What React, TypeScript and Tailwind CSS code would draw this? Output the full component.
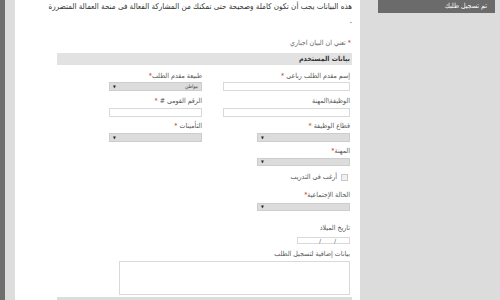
import React from 'react';

type LabelProps = { text: string; star?: string };

function Label({ text, star }: LabelProps) {
  return (
    <div className="h-[12px] leading-[12px] text-[7px] text-[#555] whitespace-nowrap">
      {text}
      {star !== undefined && <span className="text-[#c0392b]">{star}</span>}
    </div>
  );
}

function Select({ value, w, h }: { value?: string; w: string; h: string }) {
  return (
    <div
      className={`${w} ${h} flex items-center justify-between bg-[#dcdcdc] border border-[#cdcdcd] px-[3px]`}
    >
      <span className="text-[5px] leading-none text-[#444]">{value ?? ''}</span>
      <span className="text-[4px] leading-none text-[#222]">▼</span>
    </div>
  );
}

function Input({ w, h }: { w: string; h: string }) {
  return <div className={`${w} ${h} bg-white border border-[#d9d9d9]`} />;
}

export default function App() {
  return (
    <div
      dir="rtl"
      className="w-[500px] h-[300px] overflow-hidden flex flex-row-reverse font-['DejaVu_Sans',sans-serif] [font-stretch:condensed] bg-white"
    >
      {/* left strips */}
      <div className="w-[5px] h-full bg-[#6e6e6e]" />
      <div className="w-[10px] h-full bg-[#dddddd]" />

      {/* Form panel */}
      <div className="w-[345px] h-full bg-white pl-[42px] pr-[8px]">
        <p className="text-[8px] leading-[14px] text-[#333] whitespace-nowrap">
          هذه البيانات يجب أن تكون كاملة وصحيحة حتى تمكنك من المشاركة الفعالة فى منحة العمالة المتضررة
          <br />.
        </p>

        <div className="mt-[9px] h-[12px] leading-[12px] text-[7px] text-[#666] pr-[1px]">
          <span className="text-[#c0392b]">* </span>تعني ان البيان اجباري
        </div>

        {/* Section header */}
        <div className="mt-[4px] h-[12px] bg-[#e2e2e2] flex items-center pr-[2px]">
          <span className="text-[7px] font-bold text-[#333]">بيانات المستخدم</span>
        </div>

        <div className="pr-[2px]">
          {/* row 1 */}
          <div className="mt-[5px] flex">
            <div className="w-[148px]">
              <Label text="إسم مقدم الطلب رباعى" star=" *" />
              <Input w="w-[127px]" h="h-[9px]" />
            </div>
            <div className="w-[93px]">
              <Label text="طبيعة مقدم الطلب" star="*" />
              <Select value="مواطن" w="w-[93px]" h="h-[9px]" />
            </div>
          </div>

          {/* row 2 */}
          <div className="mt-[4px] flex">
            <div className="w-[148px]">
              <Label text="الوظيفة\المهنة" />
              <div className="mt-[1px]">
                <Input w="w-[127px]" h="h-[9px]" />
              </div>
            </div>
            <div className="w-[93px]">
              <Label text="الرقم القومى #" star=" *" />
              <div className="mt-[1px]">
                <Input w="w-[93px]" h="h-[9px]" />
              </div>
            </div>
          </div>

          {/* row 3 */}
          <div className="mt-[3px] flex">
            <div className="w-[148px]">
              <Label text="قطاع الوظيفة" star=" *" />
              <div className="mt-[1px]">
                <Select w="w-[93px]" h="h-[9px]" />
              </div>
            </div>
            <div className="w-[93px]">
              <Label text="التأمينات" star=" *" />
              <div className="mt-[1px]">
                <Select w="w-[93px]" h="h-[9px]" />
              </div>
            </div>
          </div>

          {/* row 4 */}
          <div className="mt-[3px]">
            <Label text="المهنة" star="*" />
            <div className="mt-[1px]">
              <Select w="w-[93px]" h="h-[8px]" />
            </div>
          </div>

          {/* checkbox */}
          <div className="mt-[5px] h-[12px] flex items-center gap-[4px] pr-[2px]">
            <div className="w-[7px] h-[7px] border border-[#c8c8c8] bg-[#f0f0f0]" />
            <span className="text-[7px] text-[#555]">أرغب فى التدريب</span>
          </div>

          {/* marital */}
          <div className="mt-[6px]">
            <Label text="الحالة الإجتماعية" star="*" />
            <div className="mt-[2px]">
              <Select w="w-[93px]" h="h-[8px]" />
            </div>
          </div>

          {/* birth date */}
          <div className="mt-[11px]">
            <Label text="تاريخ الميلاد" />
            <div className="mt-[3px] w-[53px] h-[7px] border border-[#d9d9d9] flex items-center text-[6px] leading-none text-[#444]">
              <span className="w-[13px]" />
              <span className="w-[15px]">/</span>
              <span>/</span>
            </div>
          </div>

          {/* extra */}
          <div className="mt-[4px]">
            <Label text="بيانات إضافية لتسجيل الطلب" />
            <div className="mt-[1px] w-[231px] h-[34px] border border-[#d9d9d9] bg-white" />
          </div>
        </div>

        <div className="mt-[2px] h-[10px] bg-[#dddddd]" />
      </div>

      {/* Right side panel */}
      <div className="flex-1 h-full bg-[#dcdcdc] pl-[18px] pr-[5px]">
        <div className="h-[13px] bg-[#6b6b6b] flex items-center pr-[8px]">
          <span className="text-[7px] leading-[13px] text-white">تم تسجيل طلبك</span>
        </div>
      </div>
    </div>
  );
}
